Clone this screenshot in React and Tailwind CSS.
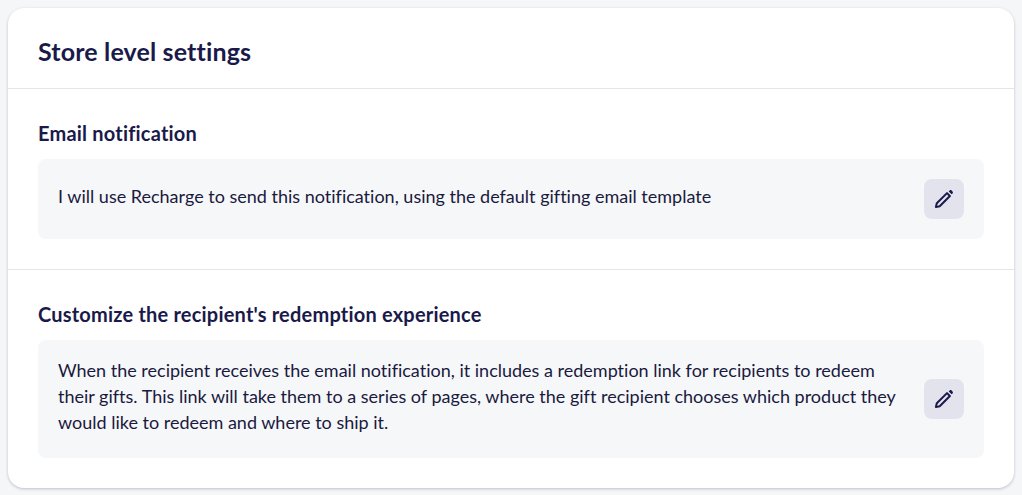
const PencilIcon = () => (
  <svg width="20" height="20" viewBox="0 0 20 20" fill="none" className="text-[#1a1a4a]">
    <path d="M13 4.1 2.8 14.3 1.9 18.1 5.7 17.2 15.9 7Z" stroke="currentColor" strokeWidth="2" strokeLinejoin="round" />
    <path d="M14.7 2.4 15.6 1.5C16.2 0.9 17 0.9 17.6 1.5L18.5 2.4C19.1 3 19.1 3.8 18.5 4.4L17.6 5.3Z" fill="currentColor" />
  </svg>
);

const SettingBox = ({ children }) => (
  <div className="flex items-center justify-between gap-5 rounded-lg bg-[#f6f7f9] p-5">
    <p className="flex-1 -translate-y-[3px] text-[18px] leading-[26px] text-[#1a1a40]">{children}</p>
    <button className="flex h-10 w-10 shrink-0 items-center justify-center rounded-lg bg-[#e3e3ee]">
      <PencilIcon />
    </button>
  </div>
);

export default function App() {
  return (
    <div className="h-[495px] overflow-hidden bg-[#f5f6f8] p-2 font-['Lato',sans-serif] [font-variant-ligatures:none]">
      <div className="h-[480px] rounded-2xl bg-white shadow-[0_1px_3px_rgba(26,26,64,0.25)]">
        <div className="flex h-[81px] items-center border-b border-[#e6e6ea] px-[30px] pt-2">
          <h1 className="text-[25px] font-bold tracking-[0.15px] text-[#1a1a4a]">Store level settings</h1>
        </div>
        <div className="border-b border-[#e6e6ea] p-[30px]">
          <h2 className="mb-3 text-[20px] leading-7 font-bold tracking-[0.2px] text-[#1a1a4a]">Email notification</h2>
          <div className="[&>div]:h-[80px]">
            <SettingBox>I will use Recharge to send this notification, using the default gifting email template</SettingBox>
          </div>
        </div>
        <div className="px-[30px] pt-[30px]">
          <h2 className="mb-3 text-[20px] leading-7 font-bold tracking-[0.2px] text-[#1a1a4a]">Customize the recipient's redemption experience</h2>
          <SettingBox>
            When the recipient receives the email notification, it includes a redemption link for recipients to redeem their gifts. This link will take them to a series of pages, where the gift recipient chooses which product they would like to redeem and where to ship it.
          </SettingBox>
        </div>
      </div>
    </div>
  );
}
